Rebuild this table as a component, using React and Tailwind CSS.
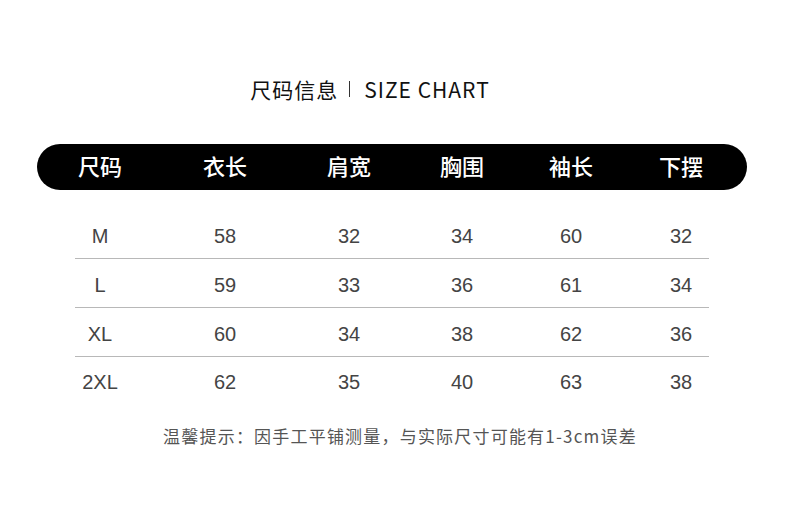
const COLS = ["尺码", "衣长", "肩宽", "胸围", "袖长", "下摆"];

const ROWS = [
  ["M", 58, 32, 34, 60, 32],
  ["L", 59, 33, 36, 61, 34],
  ["XL", 60, 34, 38, 62, 36],
  ["2XL", 62, 35, 40, 63, 38],
];

const grid = "grid grid-cols-[110px_140px_108px_118px_100px_120px] text-center";
const cjk = { fontFamily: '"Noto Sans CJK SC", "Noto Sans", sans-serif' };

export default function App() {
  return (
    <div className="w-[790px] h-[522px] bg-white overflow-hidden" style={cjk}>
      {/* Title */}
      <div className="pt-[74px] h-[144px]">
        <div className="flex items-center justify-center text-[21px] leading-[30px] text-[#111] ml-[-50px]">
          <span className="tracking-[1px]">尺码信息</span>
          <span className="w-px h-[16px] bg-[#333] ml-[11px] mr-[14px]" />
          <span className="tracking-[1px]">SIZE CHART</span>
        </div>
      </div>

      {/* Header pill */}
      <div className="ml-[37px] w-[710px] h-[46px] rounded-full bg-black flex items-center">
        <div className={`${grid} ml-[8px] w-full text-white text-[22px] font-medium leading-[30px] -mt-[4px]`}>
          {COLS.map((c) => (
            <span key={c}>{c}</span>
          ))}
        </div>
      </div>

      {/* Rows */}
      <div className="mt-[20px]" style={{ fontFamily: '"Liberation Sans", "Noto Sans CJK SC", sans-serif' }}>
        {ROWS.map((r, i) => (
          <div key={r[0]}>
            {i > 0 && <div className="ml-[75px] w-[634px] h-px bg-[#b8b8b8]" />}
            <div className={`${grid} ml-[45px] h-[48px] items-center text-[20px] text-[#444]`}>
              {r.map((v, j) => (
                <span key={j} className={i === 3 ? "pt-px" : "pt-[3px]"}>{v}</span>
              ))}
            </div>
          </div>
        ))}
      </div>

      {/* Note */}
      <p className="mt-[20px] text-center text-[17px] leading-[22px] tracking-[1.2px] text-[#555] ml-[10px]">
        温馨提示：因手工平铺测量，与实际尺寸可能有1-3cm误差
      </p>
    </div>
  );
}
